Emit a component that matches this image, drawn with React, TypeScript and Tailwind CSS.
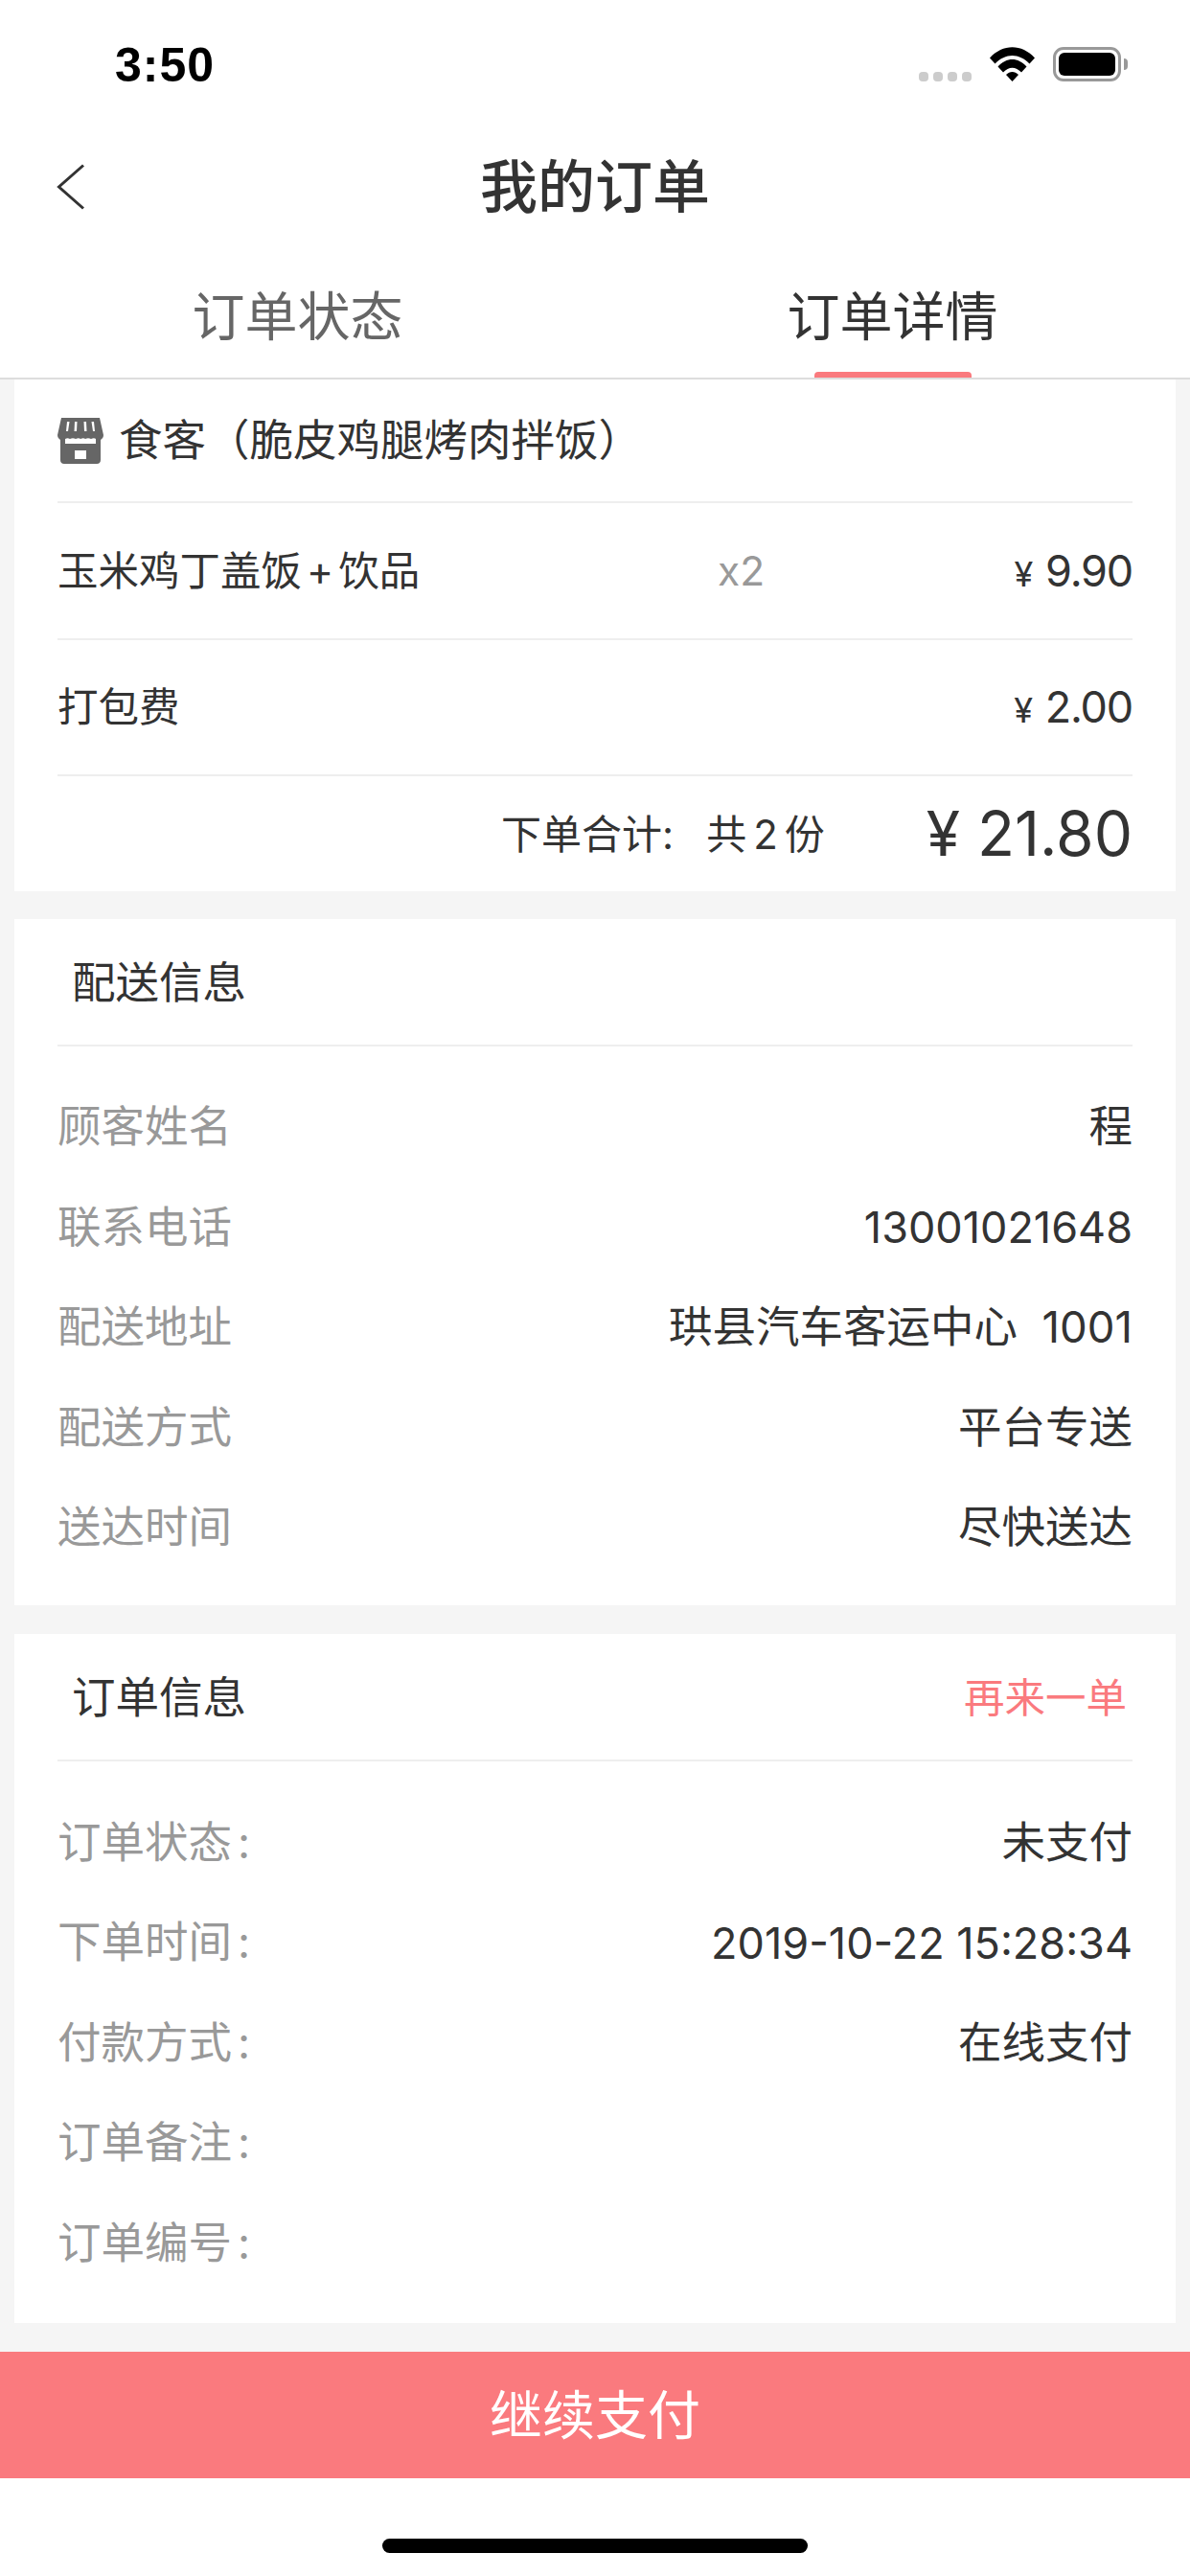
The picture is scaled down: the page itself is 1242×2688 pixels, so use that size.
const font = { fontFamily: '"Inter", "Noto Sans CJK SC", sans-serif' }

function WifiIcon() {
  return (
    <svg width="47" height="36" viewBox="0 0 47 36" fill="#000">
      <path d="M0 11.5 C13.5 -3.5 33.5 -3.5 47 11.5 L41.5 17.5 C30.5 6 16.5 6 5.5 17.5 Z" />
      <path d="M8.5 20.5 C17.5 10.5 29.5 10.5 38.5 20.5 L33 26.5 C27 20 20 20 14 26.5 Z" />
      <path d="M17 29 C21 25 26 25 30 29 L23.5 36 Z" />
    </svg>
  )
}

function BatteryIcon() {
  return (
    <div className="flex items-center">
      <div className="w-[71px] h-[36px] rounded-[11px] border-[3px] border-[#999] p-[3px]">
        <div className="w-full h-full rounded-[6px] bg-black" />
      </div>
      <div className="ml-[3px] w-[4px] h-[12px] rounded-r-[4px] bg-[#999]" />
    </div>
  )
}

function StoreIcon() {
  return (
    <svg width="48" height="48" viewBox="0 0 48 48" className="shrink-0">
      <path d="M4 0 H44 L48 18 C48 21 46 22 45 23 V44 C45 46.5 43.5 48 41 48 H7 C4.5 48 3 46.5 3 44 V23 C2 22 0 21 0 18 Z" fill="#666" />
      <path d="M10 4 H12.5 L11 14 H9 Z M18 4 H20.5 L20 14 H17.5 Z M27.5 4 H30 L30.5 14 H28 Z M35.5 4 H38 L39 14 H37 Z" fill="#fff" />
      <path d="M8 22 C10 21 11 21 13 22 C15 21 17 21 19 22 C21 21 23 21 24 22 C26 21 28 21 29 22 C31 21 33 21 35 22 C37 21 39 21 40 22 V27 H8 Z" fill="#fff" />
      <rect x="18" y="34" width="12" height="9" fill="#fff" />
    </svg>
  )
}

function Divider() {
  return <div className="h-[2px] bg-[#eeeeee]" />
}

function InfoRow({ label, value, colon }: { label: string; value?: string; colon?: boolean }) {
  // digits run a little wide in Inter, so numeric values stay at 45px
  const numeric = /^[\d\s:-]+$/.test(value || '')
  return (
    <div className="flex items-center justify-between h-[104.5px] text-[45.5px]">
      <span className="text-[#999999]">
        {label}
        {colon && <span className="ml-[6px]">:</span>}
      </span>
      <span className={numeric ? 'text-[45px] text-[#333333]' : 'text-[#333333]'}>{value}</span>
    </div>
  )
}

function Price({ amount }: { amount: string }) {
  return (
    <span className="text-[45px] tracking-[-1.2px] text-[#333333]">
      <span className="text-[36px] mr-[14px]">¥</span>
      {amount}
    </span>
  )
}

export default function App() {
  const delivery = [
    ['顾客姓名', '程'],
    ['联系电话', '13001021648'],
    ['配送地址', '珙县汽车客运中心  1001'],
    ['配送方式', '平台专送'],
    ['送达时间', '尽快送达'],
  ]
  const order = [
    ['订单状态', '未支付'],
    ['下单时间', '2019-10-22 15:28:34'],
    ['付款方式', '在线支付'],
    ['订单备注', ''],
    ['订单编号', ''],
  ]

  return (
    <div className="w-[1242px] h-[2688px] flex flex-col bg-[#f5f5f5] overflow-hidden whitespace-pre" style={font}>
      {/* Header */}
      <div className="bg-white border-b-2 border-[#dddddd]">
        <div className="h-[136px] flex items-start justify-between pl-[120px] pr-[65px] pt-[49px]">
          <span className="text-[50px] leading-[38px] tracking-[1px] font-semibold text-black [font-family:'Liberation_Sans',sans-serif]">3:50</span>
          <div className="flex items-center">
            <div className="flex items-center gap-[5px] mt-[26px] mr-[19px]">
              <div className="w-[10px] h-[10px] rounded-[4px] bg-[#cccccc]" />
              <div className="w-[10px] h-[10px] rounded-[4px] bg-[#cccccc]" />
              <div className="w-[10px] h-[10px] rounded-[4px] bg-[#cccccc]" />
              <div className="w-[10px] h-[10px] rounded-[4px] bg-[#cccccc]" />
            </div>
            <WifiIcon />
            <div className="w-[19px]" />
            <BatteryIcon />
          </div>
        </div>
        <div className="h-[118px] flex items-center justify-between pl-[59px] pr-[59px]">
          <svg width="30" height="48" viewBox="0 0 30 48" fill="none" stroke="#333" strokeWidth="3">
            <path d="M28 1.5 L2.5 24 L28 46.5" />
          </svg>
          <span className="text-[60px] font-medium text-[#333333]">我的订单</span>
          <div className="w-[30px]" />
        </div>
        <div className="h-[140px] grid grid-cols-2">
          <div className="flex flex-col items-center pt-[49px]">
            <span className="text-[55px] leading-[55px] text-[#666666]">订单状态</span>
          </div>
          <div className="flex flex-col items-center pt-[49px]">
            <span className="text-[55px] leading-[55px] text-[#333333]">订单详情</span>
            <div className="mt-auto w-[164px] h-[6px] rounded-t-[4px] bg-[#fa7a7e]" />
          </div>
        </div>
      </div>

      {/* Goods */}
      <div className="mx-[15px] px-[45px] bg-white">
        <div className="h-[127px] flex items-center gap-[16px]">
          <StoreIcon />
          <span className="pt-[2px] text-[45.5px] text-[#333333]">食客（脆皮鸡腿烤肉拌饭）</span>
        </div>
        <Divider />
        <div className="h-[141px] flex items-center text-[42.5px] text-[#333333]">
          <span className="w-[689px]">玉米鸡丁盖饭<span className="mx-[5px]">+</span>饮品</span>
          <span className="text-[#999999]">x2</span>
          <span className="ml-auto"><Price amount="9.90" /></span>
        </div>
        <Divider />
        <div className="h-[140px] flex items-center justify-between text-[42.5px] text-[#333333]">
          <span>打包费</span>
          <Price amount="2.00" />
        </div>
        <Divider />
        <div className="h-[120px] flex items-center justify-end text-[#333333]">
          <span className="text-[42px]">
            下单合计:
            <span className="ml-[34px]">共</span>
            <span className="mx-[7px]">2</span>
            份
          </span>
          <span className="ml-[106px] text-[64px]">¥ 21.80</span>
        </div>
      </div>

      {/* Delivery */}
      <div className="mt-[29px] mx-[15px] px-[45px] bg-white">
        <div className="h-[131px] pl-[15px] pt-[4px] flex items-center text-[45.5px] text-[#333333]">配送信息</div>
        <Divider />
        <div className="pt-[32px] pb-[28px]">
          {delivery.map(([label, value]) => (
            <InfoRow key={label} label={label} value={value} />
          ))}
        </div>
      </div>

      {/* Order */}
      <div className="mt-[30px] mx-[15px] px-[45px] bg-white">
        <div className="h-[131px] pl-[15px] pr-[6px] pt-[4px] flex items-center justify-between text-[#333333]">
          <span className="text-[45.5px]">订单信息</span>
          <span className="text-[42.5px] text-[#fa7a7e]">再来一单</span>
        </div>
        <Divider />
        <div className="pt-[33px] pb-[31px]">
          {order.map(([label, value]) => (
            <InfoRow key={label} label={label} value={value} colon />
          ))}
        </div>
      </div>

      {/* Footer */}
      <div className="mt-[30px] h-[132px] flex items-center justify-center bg-[#fa7a7e] text-[55px] text-white">继续支付</div>
      <div className="flex-1 bg-white flex justify-center pt-[63px]">
        <div className="w-[444px] h-[15px] rounded-full bg-black" />
      </div>
    </div>
  )
}
